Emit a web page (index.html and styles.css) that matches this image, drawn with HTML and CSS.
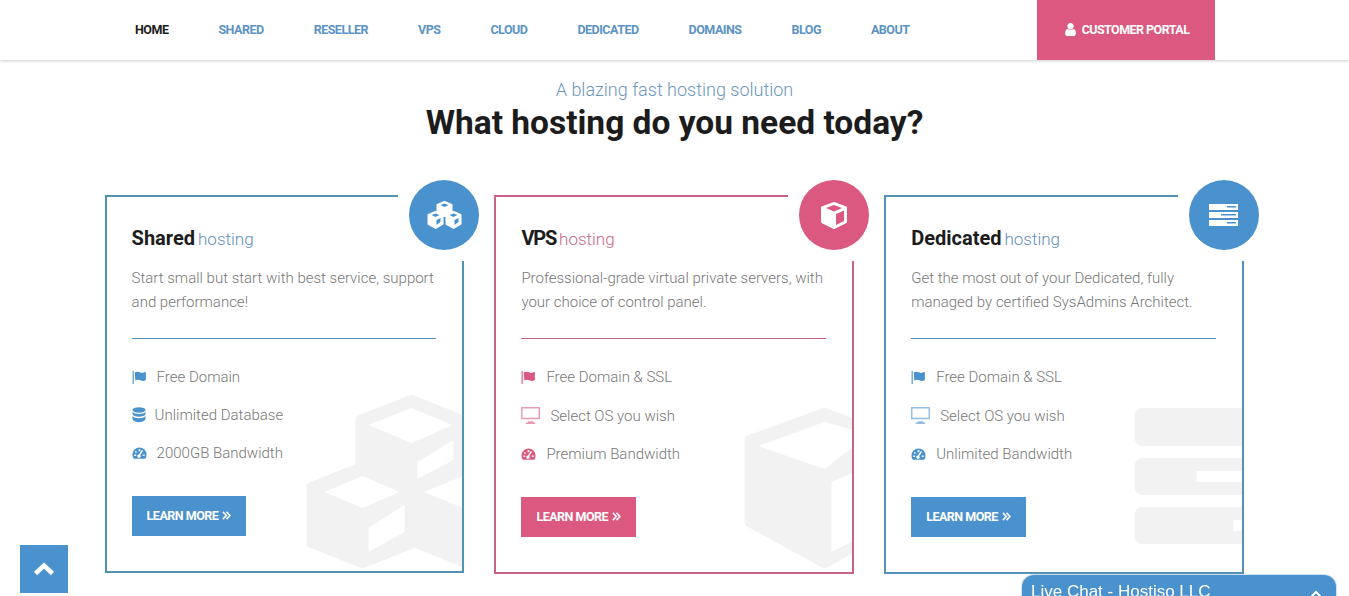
FILE: index.html
```html
<!DOCTYPE html>
<html lang="en">
<head>
  <meta charset="UTF-8">
  <title>Hostiso</title>
  <meta name="viewport" content="width=device-width, initial-scale=1">
  <link rel="stylesheet" href="styles.css">
</head>
<body>

  <svg class="defs" width="0" height="0">
    <symbol id="i-flag" viewBox="0 0 16 16">
      <rect x="0.5" y="1" width="1.6" height="14" opacity=".75"/>
      <path d="M3 2.5c2-1.200 3.800-.8 5.500 0s3.500.8 5.500-.3l.8.200v8.200c-2 1.300-4 1.300-5.800.4s-3.700-.9-5.500 0.100z"/>
    </symbol>
    <symbol id="i-db" viewBox="0 0 14 16">
      <ellipse cx="7" cy="3" rx="6.500" ry="2.700"/>
      <path d="M.5 4.800c1 1.500 3.500 2.200 6.500 2.200s5.500-.7 6.500-2.200v2.400c-.6 1.500-3.300 2.500-6.500 2.500S1.100 8.700.5 7.200z"/>
      <path d="M.5 9c1 1.500 3.500 2.200 6.500 2.200s5.500-.7 6.500-2.200v3.300c-.6 1.700-3.300 2.900-6.500 2.900S1.100 14 .5 12.300z"/>
    </symbol>
    <symbol id="i-gauge" viewBox="0 0 16 16">
      <path fill-rule="evenodd" d="M8 1.500a7.500 7.500 0 0 1 7.500 7.500c0 1.900-.6 3.400-1.500 4.500H2c-.9-1.100-1.500-2.600-1.500-4.500A7.500 7.500 0 0 1 8 1.500zM7 3.500v2h2v-2zM3.700 5.200 3 6.600l1.500.8.700-1.400zM2.500 9v1.700h2V9zM11.500 9v1.700h2V9zM11.800 5l-3 4.500a1.800 1.800 0 1 1-1.400-.5l3.200-4.700z"/>
    </symbol>
    <symbol id="i-desktop" viewBox="0 0 20 18">
      <path fill-rule="evenodd" opacity=".6" d="M0 0h20v13H0zM1.500 1.500v10h17v-10zM7 15h6v1.500h2V18H5v-1.500h2z"/>
    </symbol>
    <symbol id="i-double" viewBox="0 0 10 10">
      <path d="M1 1l3.800 4L1 9M5 1l3.800 4L5 9" fill="none" stroke="currentColor" stroke-width="1.700"/>
    </symbol>
  </svg>

  <header class="topbar">
    <nav class="topnav">
      <a class="active" href="#">HOME</a>
      <a href="#">SHARED</a>
      <a href="#">RESELLER</a>
      <a href="#">VPS</a>
      <a href="#">CLOUD</a>
      <a href="#">DEDICATED</a>
      <a href="#">DOMAINS</a>
      <a href="#">BLOG</a>
      <a href="#">ABOUT</a>
    </nav>
    <a class="portal" href="#">
      <svg width="15" height="15" viewBox="0 0 1792 1792" fill="currentColor"><path d="M1536 1399q0 109-62.500 187t-150.500 78h-854q-88 0-150.500-78t-62.500-187q0-85 8.500-160.500t31.500-152 58.500-131 94-89 134.500-34.500q131 128 313 128t313-128q76 0 134.500 34.500t94 89 58.500 131 31.500 152 8.500 160.500zm-256-887q0 159-112.500 271.500t-271.500 112.500-271.500-112.500-112.500-271.500 112.500-271.500 271.500-112.500 271.500 112.500 112.500 271.500z"/></svg>
      CUSTOMER PORTAL
    </a>
  </header>

  <section class="intro">
    <p>A blazing fast hosting solution</p>
    <h1>What hosting do you need today?</h1>
  </section>

  <main class="plans">

    <article class="card blue">
      <div class="mark">
        <svg width="360" height="378" viewBox="104.500 195 360 378">
          <g class="solid">
            <polygon points="411,400 461,420 461,468 411,490 360,468 360,420"/>
            <polygon points="362,467 413,487 413,543 362,563 311,543 311,487"/>
            <polygon points="470,467 416,490 416,543 470,565"/>
          </g>
          <g class="hole">
            <polygon points="368,425 411,408 452,425 411,443"/>
            <polygon points="417,462 453,440 453,460 417,479"/>
            <polygon points="324,492 362,476 399,492 362,508"/>
            <polygon points="368,528 404,505 404,532 368,552"/>
            <polygon points="423,492 465,475 465,509"/>
          </g>
        </svg>
      </div>
      <div class="corner">
        <span class="circle">
          <svg width="37" height="30" viewBox="0 0 36 30">
            <g fill="#fff" stroke="#fff" stroke-width="2" stroke-linejoin="round">
              <polygon points="18,2 25,5 25,13 18,16 11,13 11,5"/>
              <polygon points="9,12 16,15 16,24 9,28 2,24 2,15"/>
              <polygon points="27,12 34,15 34,24 27,28 20,24 20,15"/>
            </g>
            <g fill="#4a92cd">
              <polygon points="14,5 18,3.500 22,5 18,7"/>
              <polygon points="5,15 9,13.500 13,15 9,17"/>
              <polygon points="23,15 27,13.500 31,15 27,17"/>
              <polygon points="10,20 14,18 14,22 10,25"/>
              <polygon points="28,20 32,18 32,22 28,25"/>
            </g>
          </svg>
        </span>
      </div>
      <h2>Shared<span>hosting</span></h2>
      <p class="desc">Start small but start with best service, support and performance!</p>
      <hr>
      <ul class="features">
        <li><svg class="ic" width="15" height="15"><use href="#i-flag"/></svg><span class="gap-10">Free Domain</span></li>
        <li><svg class="ic" width="14" height="16"><use href="#i-db"/></svg><span class="gap-9">Unlimited Database</span></li>
        <li><svg class="ic" width="15" height="15"><use href="#i-gauge"/></svg><span class="gap-10">2000GB Bandwidth</span></li>
      </ul>
      <a class="btn" href="#">LEARN MORE <svg width="9" height="9"><use href="#i-double"/></svg></a>
    </article>

    <article class="card pink">
      <div class="mark">
        <svg width="360" height="379" viewBox="494.500 195 360 379">
          <polygon class="solid" points="825,413 750,440 750,522 825,563 900,522 900,440"/>
          <g class="hole">
            <polygon points="759,446 825,422 860,432 860,442 825,469"/>
            <polygon points="832,482 860,470 860,538 832,552"/>
          </g>
        </svg>
      </div>
      <div class="corner">
        <span class="circle">
          <svg width="28" height="29" viewBox="0 0 28 29">
            <polygon points="14,2 26,6.500 26,21 14,27 2,21 2,6.500" fill="#fff" stroke="#fff" stroke-width="2" stroke-linejoin="round"/>
            <polygon points="6,7 14,4 22,7 14,10.500" fill="#db5980"/>
            <polygon points="16,13 24,9.500 24,20 16,24" fill="#db5980"/>
          </svg>
        </span>
      </div>
      <h2>VPS<span>hosting</span></h2>
      <p class="desc">Professional-grade virtual private servers, with your choice of control panel.</p>
      <hr>
      <ul class="features">
        <li><svg class="ic" width="15" height="15"><use href="#i-flag"/></svg><span class="gap-10">Free Domain &amp; SSL</span></li>
        <li class="tall"><svg class="ic" width="19" height="17"><use href="#i-desktop"/></svg><span class="gap-10">Select OS you wish</span></li>
        <li><svg class="ic" width="15" height="15"><use href="#i-gauge"/></svg><span class="gap-10">Premium Bandwidth</span></li>
      </ul>
      <a class="btn" href="#">LEARN MORE <svg width="9" height="9"><use href="#i-double"/></svg></a>
    </article>

    <article class="card blue">
      <div class="mark">
        <svg width="360" height="379" viewBox="884.500 195 360 379">
          <g class="solid">
            <rect x="1135" y="408" width="130" height="38" rx="8"/>
            <rect x="1135" y="458" width="130" height="37" rx="8"/>
            <rect x="1135" y="507" width="130" height="37" rx="8"/>
          </g>
          <g class="hole">
            <rect x="1197" y="471" width="60" height="11"/>
            <rect x="1234" y="520" width="30" height="11"/>
          </g>
        </svg>
      </div>
      <div class="corner">
        <span class="circle">
          <svg width="29" height="22" viewBox="0 0 29 22">
            <g fill="#fff">
              <rect width="29" height="6"/>
              <rect y="8" width="29" height="6"/>
              <rect y="16" width="29" height="6"/>
            </g>
            <g fill="#4a92cd">
              <rect x="18" y="2" width="9" height="1.500"/>
              <rect x="12" y="10" width="15" height="1.500"/>
              <rect x="18" y="18" width="9" height="1.500"/>
            </g>
          </svg>
        </span>
      </div>
      <h2>Dedicated<span>hosting</span></h2>
      <p class="desc">Get the most out of your Dedicated, fully managed by certified SysAdmins Architect.</p>
      <hr>
      <ul class="features">
        <li><svg class="ic" width="15" height="15"><use href="#i-flag"/></svg><span class="gap-10">Free Domain &amp; SSL</span></li>
        <li class="tall"><svg class="ic" width="19" height="17"><use href="#i-desktop"/></svg><span class="gap-10">Select OS you wish</span></li>
        <li><svg class="ic" width="15" height="15"><use href="#i-gauge"/></svg><span class="gap-10">Unlimited Bandwidth</span></li>
      </ul>
      <a class="btn" href="#">LEARN MORE <svg width="9" height="9"><use href="#i-double"/></svg></a>
    </article>

  </main>

  <a class="to-top" href="#">
    <svg width="22" height="14" viewBox="0 0 22 14"><path d="M2.500 11.500 11 3.500l8.500 8" fill="none" stroke="#fff" stroke-width="4.500"/></svg>
  </a>

  <div class="chat">
    <span>Live Chat - Hostiso LLC</span>
    <svg width="12" height="8" viewBox="0 0 12 8"><path d="M1.500 6.500 6 2l4.500 4.500" fill="none" stroke="#fff" stroke-width="2"/></svg>
  </div>

</body>
</html>
```

FILE: styles.css
```css
* { box-sizing: border-box; }
html, body { overflow: hidden; height: 100%; }
body {
  margin: 0;
  background: #fff;
  color: #1c1c1c;
  font-family: Roboto, Arial, sans-serif;
}
.defs { position: absolute; }

/* top bar */
.topbar {
  height: 60px;
  padding-left: 135px;
  display: flex;
  background: #fff;
  box-shadow: 0 1px 3px rgba(0, 0, 0, .2);
}
.topnav {
  width: 902px;
  padding-bottom: 2px;
  display: flex;
  align-items: center;
  gap: 50px;
}
.topnav a {
  font-size: 12.500px;
  font-weight: 700;
  letter-spacing: -.5px;
  color: #5b93c4;
  text-decoration: none;
}
.topnav a.active { color: #1c1c1c; }
.portal {
  width: 178px;
  padding-bottom: 2px;
  display: flex;
  align-items: center;
  justify-content: center;
  gap: 4px;
  background: #db5980;
  color: #fff;
  font-size: 12.500px;
  font-weight: 700;
  letter-spacing: -.55px;
  text-decoration: none;
}

/* heading */
.intro { text-align: center; }
.intro p {
  margin: 18px 0 0;
  font-size: 18px;
  line-height: 24px;
  font-weight: 300;
  color: #6a97bd;
}
.intro h1 {
  margin: 1px 0 0;
  font-size: 33.500px;
  line-height: 40px;
  font-weight: 700;
  color: #1c1c1c;
}

/* plans */
.plans {
  margin: 52px 0 0 104.600px;
  display: grid;
  grid-template-columns: repeat(3, 359.600px);
  gap: 30.200px;
  align-items: start;
}
.card {
  position: relative;
  padding: 26px 26px 35px 25px;
  border: 2px solid var(--line);
  color: #777;
}
.card.blue { --line: #5590b5; --fill: #4a92cd; --soft: #5f8fb8; }
.card.pink { --line: #c8628a; --fill: #db5980; --soft: #c9678c; }

.mark {
  position: absolute;
  inset: 0;
  overflow: hidden;
}
.mark svg {
  position: absolute;
  left: -2px;
  top: -2px;
}
.solid { fill: #f2f2f2; stroke: #f2f2f2; stroke-width: 10; stroke-linejoin: round; }
.solid rect { stroke: none; }
.hole { fill: #fff; }

.corner {
  position: absolute;
  top: -2px;
  right: -2px;
  width: 66px;
  height: 66px;
  background: #fff;
}
.circle {
  position: absolute;
  left: 11px;
  top: -15px;
  width: 70px;
  height: 70px;
  border-radius: 50%;
  background: var(--fill);
  display: flex;
  align-items: center;
  justify-content: center;
}

.card h2, .card p, .card hr, .card ul, .btn { position: relative; }
.card h2 {
  margin: 0;
  font-size: 20px;
  line-height: 30px;
  font-weight: 700;
  color: #1c1c1c;
}
.card.pink h2 { letter-spacing: -1.200px; }
.card h2 span {
  margin-left: 3px;
  font-size: 17px;
  font-weight: 300;
  letter-spacing: 0;
  color: var(--soft);
}
.desc {
  margin: 12px 0 0;
  font-size: 15px;
  line-height: 24px;
  font-weight: 300;
}
.card hr {
  margin: 24px 0 0;
  height: 0;
  border: 0;
  border-top: 1px solid var(--line);
}
.features {
  margin: 19px 0 0;
  padding: 0;
  list-style: none;
  font-size: 15px;
  font-weight: 300;
}
.features li {
  height: 38px;
  display: flex;
  align-items: center;
}
.features li.tall { height: 39px; }
.ic { fill: var(--fill); flex: none; }
.gap-9 { margin-left: 9px; }
.gap-10 { margin-left: 10px; }

.btn {
  margin-top: 24px;
  height: 40px;
  padding: 0 15px 2px;
  display: inline-flex;
  align-items: center;
  gap: 4px;
  background: var(--fill);
  color: #fff;
  font-size: 12.500px;
  font-weight: 700;
  letter-spacing: -.5px;
  text-decoration: none;
}
.btn svg { fill: currentColor; }

/* fixed bits */
.to-top {
  position: fixed;
  left: 20px;
  bottom: 3px;
  width: 48px;
  height: 48px;
  background: #4a92cd;
  display: flex;
  align-items: center;
  justify-content: center;
}
.chat {
  position: fixed;
  left: 1022px;
  top: 575px;
  width: 314px;
  height: 40px;
  padding: 7px 14px 0 9px;
  display: flex;
  justify-content: space-between;
  background: #4a92cd;
  border-radius: 12px 12px 0 0;
  box-shadow: 0 0 0 1px #cfe2f3;
  color: #fff;
  font-family: "Liberation Sans", Arial, sans-serif;
  font-size: 17px;
  line-height: 20px;
}
.chat svg { margin-top: 8px; }
```
